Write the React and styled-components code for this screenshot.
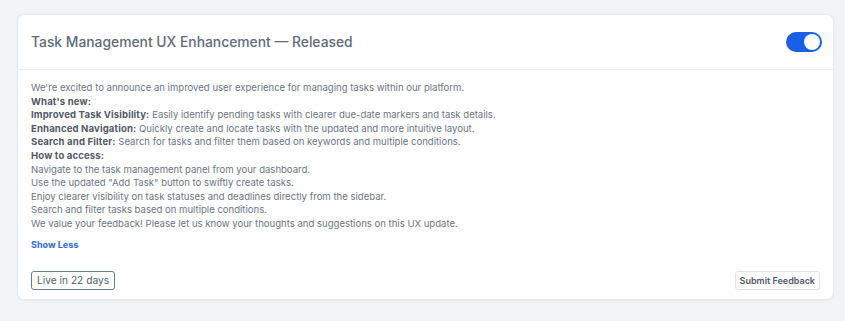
import React from "react";
import styled, { createGlobalStyle } from "styled-components";

const Global = createGlobalStyle`
  html, body { margin: 0; padding: 0; background: #f1f4f7; }
  body { font-family: Inter, "Noto Sans", sans-serif; }
`;

const Page = styled.div`
  padding: 15px 12px 22px 18px;
  box-sizing: border-box;
  width: 845px;
`;

const Card = styled.div`
  background: #fff;
  border-radius: 6px;
  box-shadow: 0 0 0 1px #e6e9ed, 0 1px 3px rgba(0,0,0,0.08);
  width: 815px;
  box-sizing: border-box;
`;

const Header = styled.div`
  display: flex;
  align-items: center;
  justify-content: space-between;
  height: 54px;
  padding: 0 11px 0 13px;
  border-bottom: 1px solid #eceef1;
`;

const Title = styled.h2`
  margin: 0;
  font-size: 13.85px;
  font-weight: 500;
  color: #5d6c78;
`;

const Toggle = styled.div`
  width: 36px;
  height: 20px;
  border-radius: 10px;
  background: #1a5fe8;
  display: flex;
  align-items: center;
  justify-content: flex-end;
  padding: 0 2px;
  box-sizing: border-box;
`;

const Knob = styled.div`
  width: 16px;
  height: 16px;
  border-radius: 50%;
  background: #fff;
`;

const Body = styled.div`
  padding: 11px 13px 9px 13px;
`;

const Text = styled.div`
  font-size: 9.55px;
  line-height: 13.6px;
  color: #6b7580;
`;

const Line = styled.div``;

const Strong = styled.span`
  font-weight: 700;
  letter-spacing: 0.15px;
  color: #505a64;
`;

const ShowLess = styled.a`
  display: inline-block;
  margin-top: 8px;
  font-size: 9px;
  font-weight: 700;
  color: #2a68e6;
  cursor: pointer;
`;

const Footer = styled.div`
  display: flex;
  justify-content: space-between;
  align-items: center;
  margin-top: 19px;
`;

const Badge = styled.span`
  display: inline-flex;
  align-items: center;
  height: 19px;
  padding: 0 5px;
  border: 1px solid #707a85;
  border-radius: 3px;
  font-size: 10.2px;
  color: #555f6a;
  box-sizing: border-box;
`;

const Button = styled.button`
  height: 19px;
  padding: 0 4px;
  border: 1px solid #dfe3e8;
  border-radius: 3px;
  background: #fff;
  font-family: inherit;
  font-size: 9px;
  font-weight: 600;
  color: #4f5a66;
  box-sizing: border-box;
`;

export default function App() {
  return (
    <Page>
      <Global />
      <Card>
        <Header>
          <Title>Task Management UX Enhancement — Released</Title>
          <Toggle><Knob /></Toggle>
        </Header>
        <Body>
          <Text>
            <Line>We're excited to announce an improved user experience for managing tasks within our platform.</Line>
            <Line><Strong>What's new:</Strong></Line>
            <Line><Strong>Improved Task Visibility:</Strong> Easily identify pending tasks with clearer due-date markers and task details.</Line>
            <Line><Strong>Enhanced Navigation:</Strong> Quickly create and locate tasks with the updated and more intuitive layout.</Line>
            <Line><Strong>Search and Filter:</Strong> Search for tasks and filter them based on keywords and multiple conditions.</Line>
            <Line><Strong>How to access:</Strong></Line>
            <Line>Navigate to the task management panel from your dashboard.</Line>
            <Line>Use the updated "Add Task" button to swiftly create tasks.</Line>
            <Line>Enjoy clearer visibility on task statuses and deadlines directly from the sidebar.</Line>
            <Line>Search and filter tasks based on multiple conditions.</Line>
            <Line>We value your feedback! Please let us know your thoughts and suggestions on this UX update.</Line>
          </Text>
          <ShowLess>Show Less</ShowLess>
          <Footer>
            <Badge>Live in 22 days</Badge>
            <Button>Submit Feedback</Button>
          </Footer>
        </Body>
      </Card>
    </Page>
  );
}
